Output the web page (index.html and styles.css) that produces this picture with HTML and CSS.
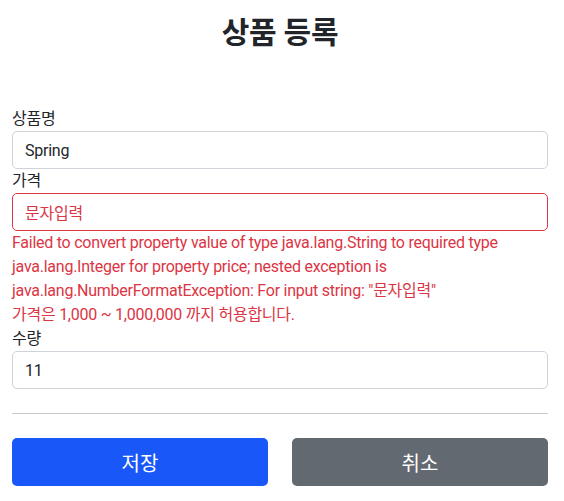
FILE: index.html
```html
<!DOCTYPE html>
<html lang="ko">
<head>
    <meta charset="UTF-8">
    <meta name="viewport" content="width=device-width, initial-scale=1.0">
    <title>상품 등록</title>
    <link rel="stylesheet" href="styles.css">
</head>
<body>
<div class="container">
    <div class="page-header">
        <h2>상품 등록</h2>
    </div>

    <form action="item.html" method="post">
        <div>
            <label for="itemName">상품명</label>
            <input type="text" id="itemName" name="itemName" class="form-control" value="Spring">
        </div>
        <div>
            <label for="price">가격</label>
            <input type="text" id="price" name="price" class="form-control field-error" value="문자입력">
            <div class="field-error-text">
                Failed to convert property value of type java.lang.String to required type java.lang.Integer for property price; nested exception is java.lang.NumberFormatException: For input string: "문자입력"<br>
                가격은 1,000 ~ 1,000,000 까지 허용합니다.
            </div>
        </div>
        <div>
            <label for="quantity">수량</label>
            <input type="text" id="quantity" name="quantity" class="form-control" value="11">
        </div>

        <hr class="divider">

        <div class="btn-row">
            <button class="btn btn-primary" type="submit">저장</button>
            <button class="btn btn-secondary" type="button" onclick="location.href='items.html'">취소</button>
        </div>
    </form>
</div>
</body>
</html>
```

FILE: styles.css
```css
body {
    margin: 0;
    font-family: Roboto, "Noto Sans CJK KR", sans-serif;
    font-size: 16px;
    line-height: 1.5;
    letter-spacing: -0.25px;
    color: #212529;
    background: #fff;
}
.container {
    max-width: 536px;
    margin-left: 12px;
}
.page-header {
    text-align: center;
    padding-top: 15px;
    padding-bottom: 56px;
}
.page-header h2 {
    margin: 0;
    font-size: 30px;
    font-weight: 600;
    line-height: 1.2;
}
label {
    display: block;
}
.form-control {
    display: block;
    box-sizing: border-box;
    width: 100%;
    height: 38px;
    padding: 6px 12px;
    font-family: inherit;
    font-size: 16px;
    line-height: 1.5;
    letter-spacing: inherit;
    color: #212529;
    border: 1px solid #ced4da;
    border-radius: 5px;
    outline: none;
}
.field-error {
    border-color: #dc3545;
    color: #dc3545;
}
.field-error-text {
    color: #dc3545;
}
.divider {
    margin: 24px 0;
    border: 0;
    border-top: 1px solid #c8c9ca;
}
.btn-row {
    display: grid;
    grid-template-columns: 1fr 1fr;
    gap: 24px;
}
.btn {
    height: 48px;
    font-family: inherit;
    font-size: 20px;
    color: white;
    border: none;
    border-radius: 5px;
    cursor: pointer;
}
.btn-primary {
    background-color: #1a57f9;
}
.btn-secondary {
    background-color: #636970;
}
```
